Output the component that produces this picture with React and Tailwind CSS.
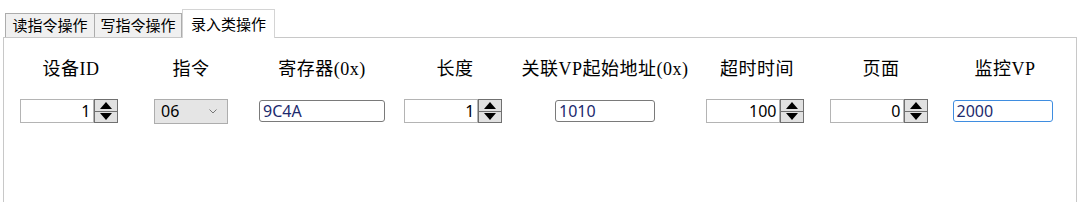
import React from "react";

const labelFont = { fontFamily: '"Liberation Serif", "Noto Sans CJK SC", serif' };
const inputFont = { fontFamily: '"Noto Sans", "Noto Sans CJK SC", sans-serif' };

function Spin({ value }) {
  return (
    <div className="flex h-[24px] w-[98px] mr-[5px]">
      <div className="flex-1 border border-[#b4b4b4] bg-white flex items-center justify-end pr-[2px] text-[16px] text-black" style={inputFont}>
        {value}
      </div>
      <div className="w-[24px] flex flex-col border border-[#707070] bg-[#e1e1e1]">
        <div className="flex-1 flex items-center justify-center border-b border-[#707070]">
          <svg width="12" height="7" viewBox="0 0 12 7"><polygon points="6,0 12,7 0,7" fill="#000" /></svg>
        </div>
        <div className="flex-1 flex items-center justify-center">
          <svg width="12" height="7" viewBox="0 0 12 7"><polygon points="0,0 12,0 6,7" fill="#000" /></svg>
        </div>
      </div>
    </div>
  );
}

function TextField({ value, width, focused }) {
  return (
    <div
      className={`h-[22px] rounded-[3px] border bg-white flex items-center pl-[3px] text-[16px] text-[#1c2a6e] ${
        focused ? "border-[#3f8de0] mr-[5px]" : "border-[#7a7a7a]"
      }`}
      style={{ width, ...inputFont }}
    >
      {value}
    </div>
  );
}

function Combo() {
  return (
    <div className="h-[25px] w-[74px] border border-[#adadad] bg-[#e5e5e5] flex items-center justify-between pl-[6px] pr-[10px] text-[16px] text-black" style={inputFont}>
      <span>06</span>
      <svg width="8" height="5" viewBox="0 0 8 5"><polyline points="0.5,0.5 4,4 7.5,0.5" fill="none" stroke="#777" strokeWidth="1" /></svg>
    </div>
  );
}

const cols = [
  { label: "设备ID", w: 120, el: <Spin value="1" /> },
  { label: "指令", w: 120, el: <Combo /> },
  { label: "寄存器(0x)", w: 142, el: <TextField value="9C4A" width={126} /> },
  { label: "长度", w: 124, el: <Spin value="1" /> },
  { label: "关联VP起始地址(0x)", w: 176, el: <TextField value="1010" width={100} /> },
  { label: "超时时间", w: 128, el: <Spin value="100" /> },
  { label: "页面", w: 120, el: <Spin value="0" /> },
  { label: "监控VP", w: 128, el: <TextField value="2000" width={100} focused /> },
];

export default function App() {
  return (
    <div
      className="w-[1080px] h-[202px] bg-white overflow-hidden"
      style={{ fontFamily: '"Noto Sans CJK SC", "Noto Sans", sans-serif' }}
    >
      <div className="flex items-end h-[37px] pl-[5px] pt-[8px]">
        <div className="h-[24px] w-[90px] border border-[#acacac] border-b-0 bg-[#f0f0f0] flex items-center justify-center text-[15px] text-black">读指令操作</div>
        <div className="h-[24px] w-[87px] border border-[#acacac] border-b-0 border-l-0 bg-[#f0f0f0] flex items-center justify-center text-[15px] text-black">写指令操作</div>
        <div className="h-[29px] w-[93px] border border-[#d4d4d4] border-b-0 bg-white flex items-center justify-center text-[15px] text-black relative top-[1px] z-10">录入类操作</div>
      </div>
      <div className="ml-[3px] w-[1074px] h-[170px] border border-[#c8c8c8] bg-white">
        <div className="flex pl-[7px] pt-[19px]">
          {cols.map((c, i) => (
            <div key={i} className="flex flex-col items-center" style={{ width: c.w }}>
              <div className="h-[24px] flex items-center text-[18px] tracking-[0.5px] text-black" style={labelFont}>{c.label}</div>
              <div className="mt-[17px] h-[26px] flex items-center">{c.el}</div>
            </div>
          ))}
        </div>
      </div>
    </div>
  );
}
